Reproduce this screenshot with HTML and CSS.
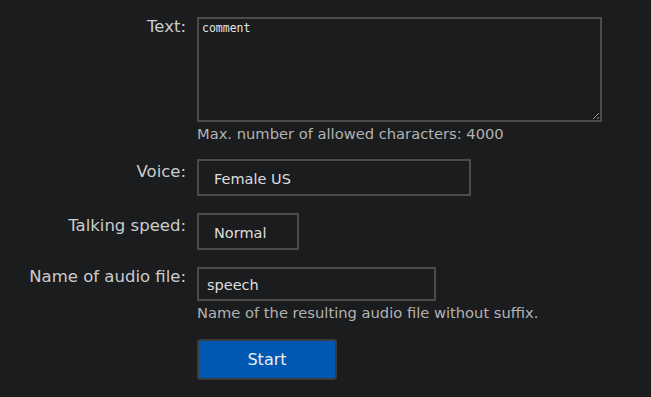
FILE: index.html
```html
<!DOCTYPE html>
<html>
<head>
    <title>Text to speech</title>
    <link rel="stylesheet" href="styles.css">
</head>
<body>
    <form class="tts-form">
        <div class="row">
            <label class="field-label" for="text">Text:</label>
            <div class="field">
                <textarea id="text" class="text-input">comment</textarea>
                <div class="hint">Max. number of allowed characters: 4000</div>
            </div>
        </div>

        <div class="row">
            <label class="field-label label-select" for="voice">Voice:</label>
            <div class="field">
                <select id="voice" class="select select-voice">
                    <option>Female US</option>
                </select>
            </div>
        </div>

        <div class="row">
            <label class="field-label label-select" for="speed">Talking speed:</label>
            <div class="field">
                <select id="speed" class="select select-speed">
                    <option>Normal</option>
                </select>
            </div>
        </div>

        <div class="row row-name">
            <label class="field-label" for="filename">Name of audio file:</label>
            <div class="field">
                <input type="text" id="filename" class="name-input" value="speech">
                <div class="hint">Name of the resulting audio file without suffix.</div>
            </div>
        </div>

        <div class="row">
            <div></div>
            <div class="field">
                <button type="button" class="start-btn">Start</button>
            </div>
        </div>
    </form>
</body>
</html>
```

FILE: styles.css
```css
body {
    margin: 0;
    background-color: #1b1c1e;
    color: #cfcfcf;
    font-family: "DejaVu Sans", sans-serif;
    font-size: 14px;
}
.tts-form {
    padding-top: 17px;
}
.row {
    display: grid;
    grid-template-columns: 186px 1fr;
    column-gap: 11px;
    margin-bottom: 17px;
}
.row-name {
    margin-bottom: 18px;
}
.field-label {
    text-align: right;
    color: #cccccc;
    font-size: 16.5px;
    line-height: 20px;
    padding-top: 0;
}
.label-select {
    padding-top: 3px;
}
.field {
    display: flex;
    flex-direction: column;
    align-items: flex-start;
}
.text-input {
    box-sizing: border-box;
    width: 405px;
    height: 105px;
    margin: 0;
    padding: 2px 3px;
    background-color: #1b1c1e;
    color: #e4e4e4;
    border: 2px solid #4b4b4b;
    font-family: "DejaVu Sans Mono", monospace;
    font-size: 11.5px;
    line-height: 14px;
    outline: none;
    color-scheme: dark;
}
.hint {
    margin-top: 3px;
    color: #b3b3b3;
    font-size: 14.7px;
    line-height: 17px;
}
.select {
    box-sizing: border-box;
    appearance: none;
    -webkit-appearance: none;
    height: 37px;
    margin: 0;
    padding: 2px 15px 0;
    background-color: #1b1c1e;
    color: #dedede;
    border: 2px solid #4b4b4b;
    border-radius: 0;
    font-family: "DejaVu Sans", sans-serif;
    font-size: 14.5px;
}
.select-voice {
    width: 274px;
}
.select-speed {
    width: 102px;
}
.name-input {
    box-sizing: border-box;
    width: 239px;
    height: 34px;
    margin: 0;
    padding: 1px 8px 0;
    background-color: #1b1c1e;
    color: #dedede;
    border: 2px solid #4b4b4b;
    font-family: "DejaVu Sans", sans-serif;
    font-size: 14.5px;
    outline: none;
}
.start-btn {
    box-sizing: border-box;
    width: 140px;
    height: 41px;
    padding: 0;
    background-color: #0158b3;
    color: #eeeeee;
    border: 2px solid #3a3b3d;
    border-radius: 3px;
    font-family: "DejaVu Sans", sans-serif;
    font-size: 16px;
    cursor: pointer;
}
```
